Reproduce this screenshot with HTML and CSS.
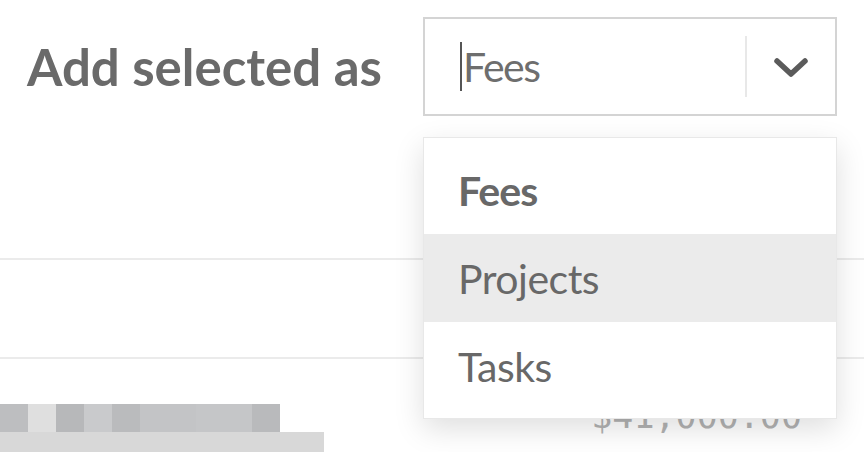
FILE: index.html
```html
<!DOCTYPE html>
<html lang="en">
<head>
    <meta charset="UTF-8">
    <title>Add selected as</title>
    <link rel="stylesheet" href="styles.css">
</head>
<body>
    <div class="toolbar">
        <h2 class="label">Add selected as</h2>
        <div class="select">
            <div class="select-value">
                <span class="caret"></span>
                <span>Fees</span>
            </div>
            <span class="divider"></span>
            <span class="toggle">
                <svg width="36" height="22" viewBox="0 0 36 22">
                    <path d="M4 4 L18 17 L32 4" fill="none" stroke="#5b5b5b" stroke-width="5.5" stroke-linecap="round" stroke-linejoin="round"/>
                </svg>
            </span>
        </div>
    </div>

    <div class="menu">
        <div class="menu-item selected">Fees</div>
        <div class="menu-item hover">Projects</div>
        <div class="menu-item">Tasks</div>
    </div>

    <div class="list">
        <div class="row"></div>
        <div class="row last">
            <div class="name">
                <div class="blocks">
                    <span class="b1"></span>
                    <span class="b2"></span>
                    <span class="b3"></span>
                    <span class="b4"></span>
                    <span class="b5"></span>
                    <span class="b6"></span>
                    <span class="b7"></span>
                    <span class="b8"></span>
                </div>
                <div class="bar"></div>
            </div>
            <div class="amount">$41,000.00</div>
        </div>
    </div>
</body>
</html>
```

FILE: styles.css
```css
body {
    margin: 0;
    background: #fff;
    font-family: Lato, "Open Sans", sans-serif;
    color: #686868;
    overflow: hidden;
}

.toolbar {
    display: grid;
    grid-template-columns: 396px 414px;
    align-items: center;
    padding: 17px 0 0 27px;
}

.label {
    margin: 0;
    font-size: 51px;
    font-weight: 700;
    color: #6a6a6a;
}

.select {
    box-sizing: border-box;
    height: 99px;
    border: 2px solid #d4d4d4;
    display: flex;
    align-items: center;
}

.select-value {
    flex: 1;
    display: flex;
    align-items: center;
    padding-left: 35px;
    font-size: 41px;
    letter-spacing: -1.5px;
    color: #6e6e6e;
}

.caret {
    width: 2px;
    height: 49px;
    background: #555;
    margin-right: 1px;
}

.divider {
    width: 2px;
    height: 61px;
    background: #e8e8e8;
}

.toggle {
    width: 88px;
    display: flex;
    justify-content: center;
    padding-top: 2px;
}

.menu {
    position: absolute;
    left: 423px;
    top: 137px;
    width: 414px;
    box-sizing: border-box;
    padding: 8px 0;
    background: #fff;
    border: 1px solid #e8e8e8;
    box-shadow: 0 10px 28px rgba(0, 0, 0, 0.13);
    z-index: 2;
}

.menu-item {
    height: 88px;
    display: flex;
    align-items: center;
    padding-left: 34px;
    font-size: 41px;
    letter-spacing: -0.5px;
    color: #686868;
}

.menu-item.selected {
    font-weight: 700;
    letter-spacing: -1px;
}

.menu-item.hover {
    background: #ebebeb;
}

.list {
    margin-top: 142px;
}

.row {
    height: 97px;
    border-top: 2px solid #ebebeb;
}

.row.last {
    display: flex;
    justify-content: space-between;
    align-items: flex-start;
    padding-top: 45px;
    box-sizing: border-box;
    height: 95px;
    overflow: hidden;
}

.blocks {
    display: flex;
    height: 28px;
}

.blocks span {
    width: 28px;
}

.blocks .b1 { background: #bdbec0; }
.blocks .b2 { background: #dfdfdf; }
.blocks .b3 { background: #b7b8ba; }
.blocks .b4 { background: #c9cacc; }
.blocks .b5 { background: #babbbd; }
.blocks .b6 { background: #c3c4c6; width: 56px; }
.blocks .b7 { background: #c5c6c8; width: 56px; }
.blocks .b8 { background: #b9babc; }

.bar {
    width: 324px;
    height: 20px;
    background: #d8d8d8;
}

.amount {
    margin-right: 62px;
    margin-top: -8px;
    font-family: "DejaVu Sans Mono", monospace;
    font-size: 35px;
    color: #b2b2b2;
}
```
